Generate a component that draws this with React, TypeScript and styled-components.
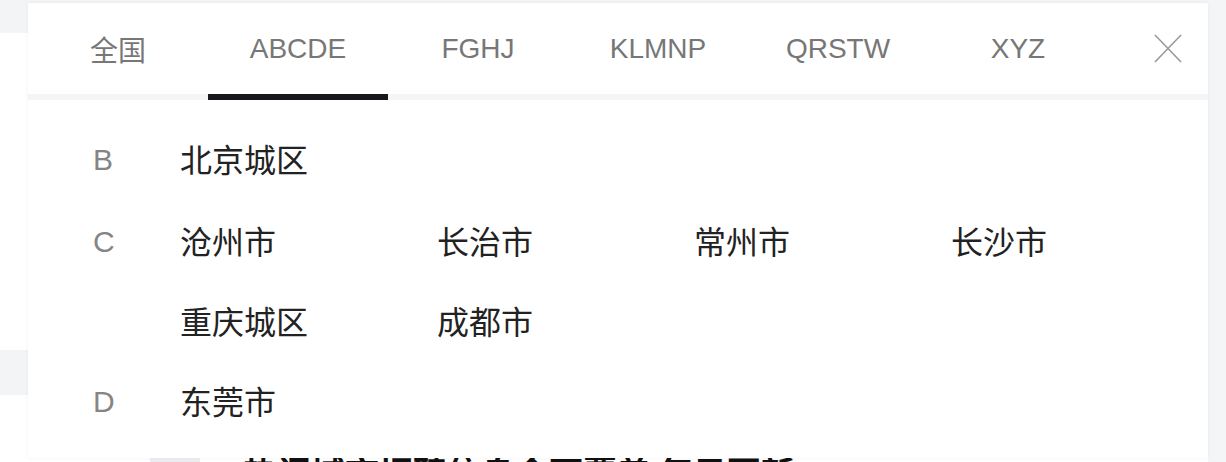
import React, { useState } from 'react';
import styled, { createGlobalStyle } from 'styled-components';

const GlobalStyle = createGlobalStyle`
  html, body {
    margin: 0;
    padding: 0;
    background: #ffffff;
    font-family: "Liberation Sans", "Noto Sans CJK SC", sans-serif;
  }
`;

const Page = styled.div`
  position: relative;
  width: 1226px;
  height: 462px;
  overflow: hidden;
  display: grid;
  grid-template-columns: 1fr 18px;
  background: #ffffff;
`;

const PageMain = styled.div`
  display: flex;
  flex-direction: column;
`;

const PageHeader = styled.div`
  height: 30px;
  background: #f3f4f6;
`;

const PageTop = styled.div`
  height: 3px;
  background: #f3f4f6;
`;

const PageBlock = styled.div<{ $h: number; $gray?: boolean }>`
  height: ${(p) => p.$h}px;
  background: ${(p) => (p.$gray ? '#f3f4f6' : '#ffffff')};
`;

const PageHeadline = styled.div`
  display: flex;
  align-items: flex-start;
  gap: 43px;
  padding-left: 150px;
  height: 40px;
`;

const HeadlineThumb = styled.div`
  width: 50px;
  height: 30px;
  margin-top: 5px;
  background: #eceef1;
`;

const HeadlineText = styled.div`
  font-family: "Noto Sans CJK SC", sans-serif;
  font-weight: 700;
  font-size: 34px;
  line-height: 40px;
  color: #111;
  white-space: nowrap;
`;

const SideStrip = styled.div`
  background: #f4f5f7;
`;

const Sheet = styled.div`
  position: absolute;
  left: 28px;
  top: 3px;
  width: 1180px;
  height: 455px;
  background: #ffffff;
  box-shadow: 0 0 4px rgba(0, 0, 0, 0.05);
  display: flex;
  flex-direction: column;
`;

const TabBar = styled.div`
  display: flex;
  align-items: stretch;
  height: 97px;
`;

const Tab = styled.button<{ $active?: boolean }>`
  width: 180px;
  border: none;
  background: transparent;
  padding: 0 0 6px;
  font-family: "Liberation Sans", "Noto Sans CJK SC", sans-serif;
  font-size: 28px;
  color: #777;
  cursor: pointer;
  box-shadow: inset 0 -6px 0 ${(p) => (p.$active ? '#18181c' : '#f5f5f6')};
`;

const TabRest = styled.div`
  flex: 1;
  display: flex;
  align-items: center;
  justify-content: flex-end;
  padding: 0 26px 6px 0;
  box-shadow: inset 0 -6px 0 #f5f5f6;
`;

const CloseButton = styled.button`
  width: 28px;
  height: 29px;
  padding: 0;
  border: none;
  background: transparent;
  cursor: pointer;
  display: flex;
`;

const Body = styled.div`
  padding: 18px 0 0 65px;
  display: flex;
  flex-direction: column;
`;

const Group = styled.div`
  display: flex;
  align-items: flex-start;
`;

const Letter = styled.div`
  width: 88px;
  height: 80px;
  line-height: 80px;
  padding-top: 2px;
  font-size: 30px;
  color: #858585;
  font-family: "Liberation Sans", sans-serif;
`;

const CityGrid = styled.div`
  display: grid;
  grid-template-columns: repeat(4, 257px);
  grid-auto-rows: 80px;
`;

const City = styled.div`
  line-height: 80px;
  font-size: 32px;
  color: #222;
  font-family: "Noto Sans CJK SC", sans-serif;
  white-space: nowrap;
  cursor: pointer;
`;

const tabs = ['全国', 'ABCDE', 'FGHJ', 'KLMNP', 'QRSTW', 'XYZ'];

const groups: { letter: string; cities: string[] }[] = [
  { letter: 'B', cities: ['北京城区'] },
  { letter: 'C', cities: ['沧州市', '长治市', '常州市', '长沙市', '重庆城区', '成都市'] },
  { letter: 'D', cities: ['东莞市'] },
];

const App: React.FC = () => {
  const [active, setActive] = useState(1);

  return (
    <>
      <GlobalStyle />
      <Page>
        <PageMain>
          <PageTop />
          <PageHeader />
          <PageBlock $h={317} />
          <PageBlock $h={45} $gray />
          <PageBlock $h={57} />
          <PageHeadline>
            <HeadlineThumb />
            <HeadlineText>热门城市招聘信息全面覆盖 每日更新</HeadlineText>
          </PageHeadline>
        </PageMain>
        <SideStrip />

        <Sheet>
          <TabBar>
            {tabs.map((t, i) => (
              <Tab key={t} $active={i === active} onClick={() => setActive(i)}>
                {t}
              </Tab>
            ))}
            <TabRest>
              <CloseButton aria-label="关闭">
                <svg width="28" height="29" viewBox="0 0 28 29">
                  <path d="M1 1 L27 28 M27 1 L1 28" stroke="#9a9a9a" strokeWidth="1.6" fill="none" />
                </svg>
              </CloseButton>
            </TabRest>
          </TabBar>
          <Body>
            {groups.map((g) => (
              <Group key={g.letter}>
                <Letter>{g.letter}</Letter>
                <CityGrid>
                  {g.cities.map((c) => (
                    <City key={c}>{c}</City>
                  ))}
                </CityGrid>
              </Group>
            ))}
          </Body>
        </Sheet>
      </Page>
    </>
  );
};

export default App;
